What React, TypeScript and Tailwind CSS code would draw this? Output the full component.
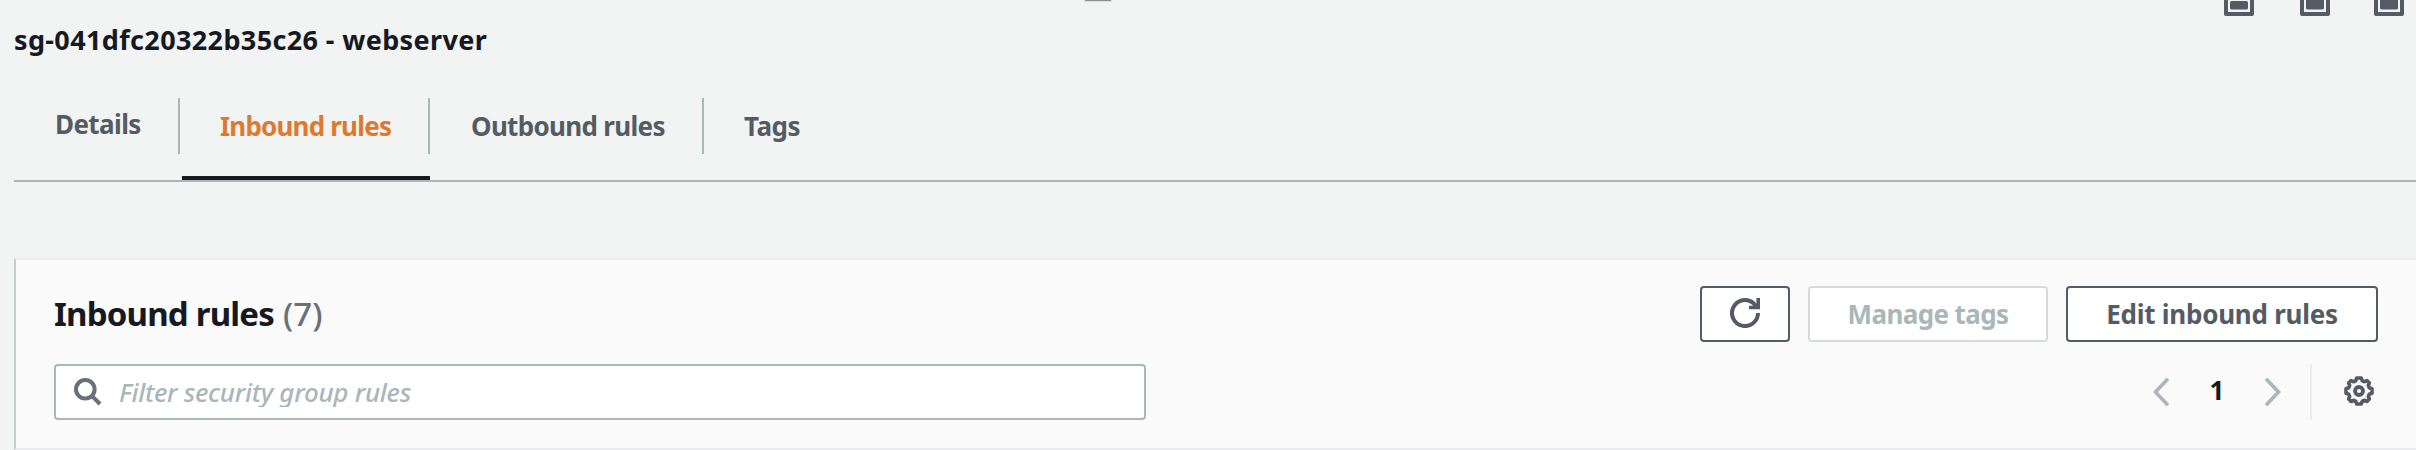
import type { ReactNode } from "react";

function Tab({ children, className }: { children: ReactNode; className: string }) {
  return (
    <div className={`h-14 shrink-0 whitespace-nowrap text-[26px] font-bold leading-[56px] ${className}`}>
      {children}
    </div>
  );
}

function PanelIcon({ short = false }: { short?: boolean }) {
  return (
    <svg width="30" height="16" viewBox="0 0 30 16" className="shrink-0">
      <path d="M0 0H30V14Q30 16 28 16H2Q0 16 0 14Z" fill="#545b64" />
      <path d="M4 0H26V12H4Z" fill="#f2f3f3" />
      {short ? (
        <rect x="6" y="1" width="18" height="8.5" rx="1.5" fill="#545b64" />
      ) : (
        <path d="M6 0H24V8Q24 9.5 22.5 9.5H7.5Q6 9.5 6 8Z" fill="#545b64" />
      )}
    </svg>
  );
}

function Gear() {
  return (
    <svg width="30" height="30" viewBox="0 0 30 30" fill="none" stroke="#545b64" className="shrink-0">
      <path
        d="M12.7 2H17.3L18.3 4.8L20.6 5.7L23 4.6L25.4 7L24.3 9.4L25.2 11.7L28 12.7V17.3L25.2 18.3L24.3 20.6L25.4 23L23 25.4L20.6 24.3L18.3 25.2L17.3 28H12.7L11.7 25.2L9.4 24.3L7 25.4L4.6 23L5.7 20.6L4.8 18.3L2 17.3V12.7L4.8 11.7L5.7 9.4L4.6 7L7 4.6L9.4 5.7L11.7 4.8Z"
        strokeWidth="3.6"
        strokeLinejoin="round"
      />
      <circle cx="15" cy="15" r="4" strokeWidth="3.8" />
    </svg>
  );
}

export default function App() {
  return (
    <div className="flex h-[450px] w-[2416px] flex-col overflow-hidden bg-[#f2f3f3] font-['Noto_Sans',sans-serif] text-[#545b64]">
      <header className="flex h-[98px] items-start pl-[14px]">
        <h1 className="w-[1070px] whitespace-nowrap pt-5 text-[27px] font-bold leading-[39px] tracking-[0.37px] text-[#16191f]">
          sg-041dfc20322b35c26 - webserver
        </h1>
        <div className="h-[2px] w-7 border-x border-b border-[#dcdede] bg-[#8d8f90]" />
        <div className="ml-auto flex pr-3">
          <PanelIcon short />
          <div className="w-[46px]" />
          <PanelIcon />
          <div className="w-11" />
          <PanelIcon />
        </div>
      </header>

      <nav className="ml-[14px] flex h-[84px] shrink-0 border-b-2 border-[#aab7b8]">
        <div className="flex h-14 w-[166px] border-r-2 border-[#aab7b8]">
          <Tab className="-mt-0.5 pl-[41px] tracking-[-0.6px]">Details</Tab>
        </div>
        <div className="ml-0.5 flex w-[248px] flex-col justify-between">
          <div className="h-14 border-r-2 border-[#aab7b8]">
            <Tab className="pl-[38px] tracking-[-0.8px] text-[#dd7a32]">Inbound rules</Tab>
          </div>
          <div className="h-1 bg-[#16191f]" />
        </div>
        <div className="h-14 w-[274px] border-r-2 border-[#aab7b8]">
          <Tab className="pl-[41px] tracking-[-0.68px]">Outbound rules</Tab>
        </div>
        <Tab className="pl-[40px] tracking-[-0.5px]">Tags</Tab>
      </nav>

      <section className="ml-[14px] mt-[76px] flex h-[192px] shrink-0 flex-col border-y-2 border-l-2 border-y-[#eaeded] border-l-[#c5cccd] bg-[#fafafa] pl-[38px] pr-[38px] pt-[26px]">
        <div className="flex h-14 items-center">
          <h2 className="whitespace-nowrap text-[33px] font-bold leading-[56px] tracking-[-0.8px] text-[#16191f]">
            Inbound rules
          </h2>
          <span className="ml-[9px] text-[33px] font-medium leading-[56px] text-[#687078]">(7)</span>
          <div className="ml-auto flex gap-[18px] text-[26px] font-bold leading-[52px]">
            <button className="flex h-14 w-[90px] items-center justify-center rounded-[4px] border-2 border-[#545b64] bg-white">
              <svg width="30" height="30" viewBox="0 0 30 30" fill="none" stroke="#545b64" strokeWidth="4" className="-mt-0.5">
                <path d="M28 15A13 13 0 1 1 23.5 5.2L27 9.5" />
                <path d="M28.2 0V9.5H19" strokeWidth="3.6" />
              </svg>
            </button>
            <button className="h-14 w-60 whitespace-nowrap rounded-[4px] border-2 border-[#d5dbdb] bg-white tracking-[-0.6px] text-[#aab7b8]">
              Manage tags
            </button>
            <button className="h-14 w-[312px] whitespace-nowrap rounded-[4px] border-2 border-[#545b64] bg-white tracking-[-0.25px]">
              Edit inbound rules
            </button>
          </div>
        </div>
        <div className="mt-[22px] flex h-14 items-center">
          <div className="flex h-14 w-[1092px] items-center rounded-[4px] border-2 border-[#aab7b8] bg-white pl-[18px]">
            <svg width="28" height="28" viewBox="0 0 28 28" fill="none" stroke="#687078" strokeWidth="4">
              <circle cx="11.3" cy="11.3" r="9.3" />
              <path d="M17.8 17.8L26 26" />
            </svg>
            <span className="ml-[17px] h-[30px] overflow-hidden whitespace-nowrap text-[26px] font-medium italic leading-[30px] tracking-[-0.3px] text-[#aab7b8]">
              Filter security group rules
            </span>
          </div>
          <div className="ml-auto flex h-14 items-center">
            <svg width="17" height="30" viewBox="0 0 17 30" fill="none" stroke="#aab7b8" strokeWidth="3.6">
              <path d="M15 1.8L2.5 15L15 28.2" />
            </svg>
            <span className="-mt-1 w-[94px] text-center text-[26px] font-bold leading-[56px] text-[#16191f]">1</span>
            <svg width="17" height="30" viewBox="0 0 17 30" fill="none" stroke="#aab7b8" strokeWidth="3.6">
              <path d="M2 1.8L14.5 15L2 28.2" />
            </svg>
            <div className="ml-[29px] mr-8 h-14 w-0.5 bg-[#eaeded]" />
            <div className="-mt-0.5 mr-1">
              <Gear />
            </div>
          </div>
        </div>
      </section>
    </div>
  );
}
